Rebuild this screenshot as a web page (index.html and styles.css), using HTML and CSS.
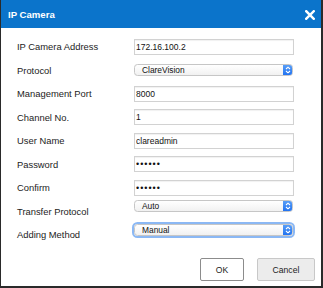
FILE: index.html
```html
<!DOCTYPE html>
<html>
<head>
<meta charset="utf-8">
<link rel="stylesheet" href="styles.css">
</head>
<body>
<div class="dialog">
  <div class="header">
    <span class="title">IP Camera</span>
    <svg class="close" width="10" height="10" viewBox="0 0 10 10"><path d="M1.2 1.2 L8.8 8.8 M8.8 1.2 L1.2 8.8" stroke="#fff" stroke-width="2.4" stroke-linecap="square"/></svg>
  </div>
  <div class="form">
    <label class="lbl">IP Camera Address</label>
    <input class="field" type="text" value="172.16.100.2" readonly>
    <label class="lbl">Protocol</label>
    <div class="select"><span class="sel-text">ClareVision</span><span class="arrow"><svg width="6" height="8" viewBox="0 0 6 8"><path d="M1 3 L3 1.2 L5 3 M1 5 L3 6.8 L5 5" fill="none" stroke="#fff" stroke-width="1.1"/></svg></span></div>
    <label class="lbl">Management Port</label>
    <input class="field" type="text" value="8000" readonly>
    <label class="lbl">Channel No.</label>
    <input class="field" type="text" value="1" readonly>
    <label class="lbl">User Name</label>
    <input class="field" type="text" value="clareadmin" readonly>
    <label class="lbl">Password</label>
    <input class="field pw" type="password" value="abcdef" readonly>
    <label class="lbl">Confirm</label>
    <input class="field pw" type="password" value="abcdef" readonly>
    <label class="lbl">Transfer Protocol</label>
    <div class="select low"><span class="sel-text">Auto</span><span class="arrow"><svg width="6" height="8" viewBox="0 0 6 8"><path d="M1 3 L3 1.2 L5 3 M1 5 L3 6.8 L5 5" fill="none" stroke="#fff" stroke-width="1.1"/></svg></span></div>
    <label class="lbl">Adding Method</label>
    <div class="select low focus"><span class="sel-text">Manual</span><span class="arrow"><svg width="6" height="8" viewBox="0 0 6 8"><path d="M1 3 L3 1.2 L5 3 M1 5 L3 6.8 L5 5" fill="none" stroke="#fff" stroke-width="1.1"/></svg></span></div>
  </div>
  <div class="buttons">
    <button class="btn ok">OK</button>
    <button class="btn cancel">Cancel</button>
  </div>
</div>
</body>
</html>
```
FILE: styles.css
```css
html, body {
  margin: 0;
  padding: 0;
  background: #fff;
}
.dialog {
  width: 323px;
  height: 288px;
  box-sizing: border-box;
  border-left: 1px solid #2a2a2a;
  border-right: 2px solid #2a2a2a;
  border-bottom: 2px solid #2a2a2a;
  background: #fff;
  font-family: "Liberation Sans", Arial, sans-serif;
  display: flex;
  flex-direction: column;
}
.header {
  height: 28px;
  background: #0b74cb;
  display: flex;
  align-items: center;
  justify-content: space-between;
  padding: 0 6px 0 7px;
}
.title {
  color: #fff;
  font-weight: bold;
  font-size: 9.6px;
}
.close {
  display: block;
  margin-top: 1px;
}
.form {
  margin-top: 6.75px;
  padding-left: 16px;
  display: grid;
  grid-template-columns: 117px 160px;
  grid-auto-rows: 23.5px;
  align-items: center;
}
.lbl {
  font-size: 9.4px;
  color: #1c1c1c;
}
.field {
  width: 160px;
  height: 16px;
  box-sizing: border-box;
  margin: 0;
  border: 1px solid #d2d2d2;
  box-shadow: inset 0 1px 1px rgba(0,0,0,0.06);
  padding: 0 0 0 1px;
  font-family: "Liberation Sans", Arial, sans-serif;
  font-size: 8.5px;
  color: #111;
  background: #fff;
  outline: none;
}
.field.pw {
  letter-spacing: 1px;
  font-size: 9px;
}
.select {
  width: 159px;
  height: 12px;
  box-sizing: border-box;
  border: 1px solid #c6c6c6;
  border-radius: 3.5px;
  background: linear-gradient(#ffffff, #f1f1f1);
  display: flex;
  align-items: center;
  justify-content: space-between;
  overflow: hidden;
}
.select.low {
  align-self: start;
  margin-top: 1px;
}
.select.focus {
  box-shadow: 0 0 0.5px 2px rgba(100, 160, 240, 0.75);
  margin-top: 1.5px;
}
.sel-text {
  font-size: 8.4px;
  color: #111;
  padding-left: 7px;
}
.arrow {
  width: 10px;
  height: 12px;
  margin-right: -1px;
  background: linear-gradient(#5ea2f7, #1d6ff0);
  border-radius: 0 3.5px 3.5px 0;
  display: flex;
  align-items: center;
  justify-content: center;
}
.arrow svg {
  display: block;
}
.buttons {
  margin-top: 11.75px;
  display: flex;
  justify-content: flex-end;
  gap: 13px;
  padding-right: 6px;
}
.btn {
  height: 23px;
  box-sizing: border-box;
  margin: 0;
  padding: 0;
  font-family: "Liberation Sans", Arial, sans-serif;
  font-size: 8.6px;
  color: #222;
  border-radius: 2px;
}
.ok {
  width: 44px;
  background: #fff;
  border: 1px solid #8c8c8c;
}
.cancel {
  width: 58px;
  background: #ececec;
  border: 1px solid #c8c8c8;
}
```
